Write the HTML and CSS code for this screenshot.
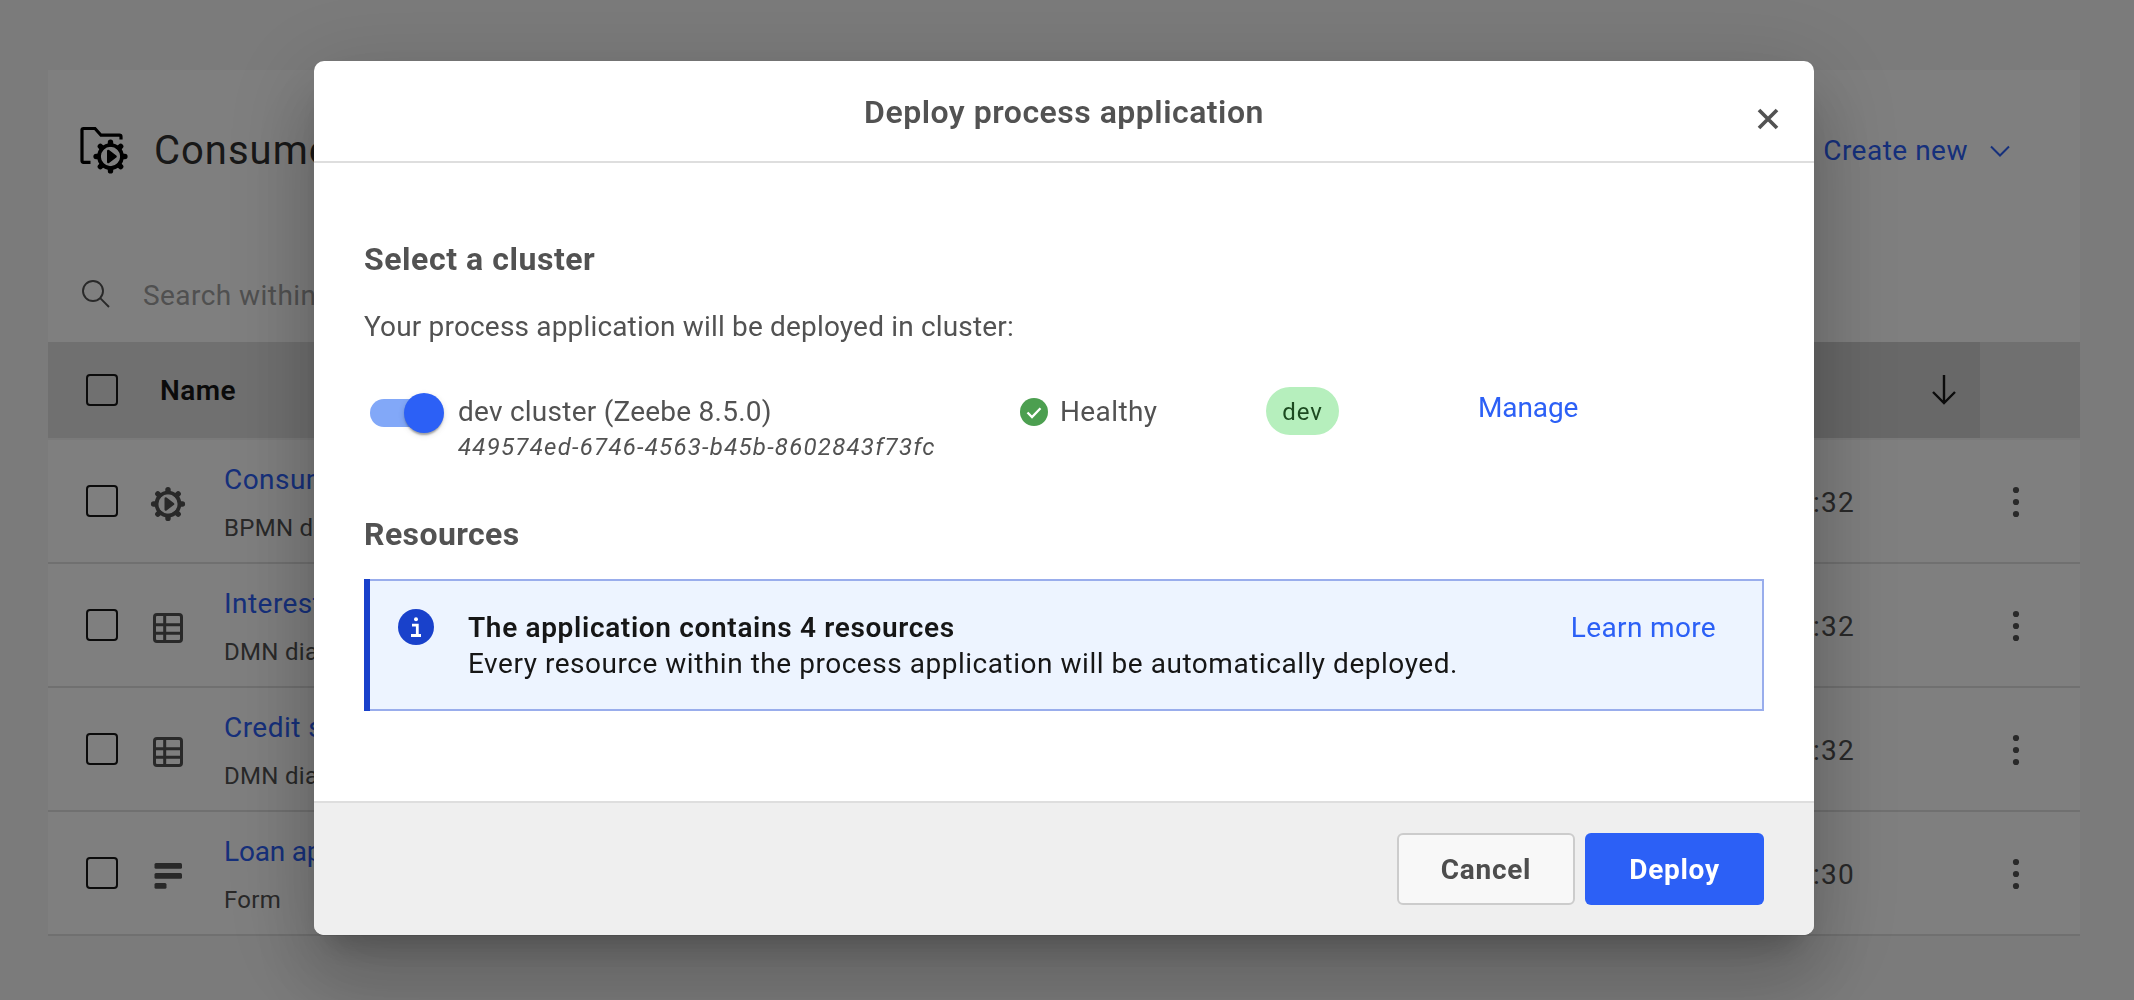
FILE: index.html
```
<!DOCTYPE html>
<html lang="en">
<head>
<meta charset="utf-8">
<title>Deploy process application</title>
<link rel="stylesheet" href="styles.css">
</head>
<body>
<svg class="sprite" aria-hidden="true">
  <defs>
    <g id="tooth"><path d="M0-12.500V-14.400" fill="none" stroke="currentColor" stroke-width="5.400" stroke-linecap="round"/></g>
    <symbol id="gear" viewBox="-18 -18 36 36">
      <circle r="11.500" fill="none" stroke="currentColor" stroke-width="3.700"/>
      <use href="#tooth"/><use href="#tooth" transform="rotate(45)"/><use href="#tooth" transform="rotate(90)"/><use href="#tooth" transform="rotate(135)"/>
      <use href="#tooth" transform="rotate(180)"/><use href="#tooth" transform="rotate(225)"/><use href="#tooth" transform="rotate(270)"/><use href="#tooth" transform="rotate(315)"/>
      <path d="M-2.200-5.400L5 0-2.200 5.400Z" fill="currentColor" stroke="currentColor" stroke-width="2.600" stroke-linejoin="round"/>
    </symbol>
    <symbol id="table" viewBox="0 0 30 30">
      <path d="M4 1.500H26Q28.500 1.500 28.500 4V26Q28.500 28.500 26 28.500H4Q1.500 28.500 1.500 26V4Q1.500 1.500 4 1.500ZM1.500 11.700H28.500M1.500 20.200H28.500M11.700 1.500V28.500" fill="none" stroke="currentColor" stroke-width="3"/>
    </symbol>
    <symbol id="form" viewBox="0 0 30 30">
      <rect x="1.500" y="2" width="27.500" height="5.800" rx="1.500" fill="currentColor"/>
      <rect x="1.500" y="12" width="27.500" height="5.800" rx="1.500" fill="currentColor"/>
      <rect x="1.500" y="22" width="12" height="5.800" rx="1.500" fill="currentColor"/>
    </symbol>
    <symbol id="kebab" viewBox="0 0 8 32">
      <circle cx="4" cy="4" r="3.100"/><circle cx="4" cy="16" r="3.100"/><circle cx="4" cy="28" r="3.100"/>
    </symbol>
  </defs>
</svg>

<main class="panel">
  <header class="panel-head">
    <svg class="folder" viewBox="0 0 50 50">
      <path d="M10.500 36.300H3.500Q2 36.300 2 34.800V4Q2 2.500 3.500 2.500H15L21 9.200H39.500Q41 9.200 41 10.700V13.500" fill="none" stroke="currentColor" stroke-width="3.200"/>
      <use href="#gear" x="12.500" y="12.500" width="36" height="36"/>
    </svg>
    <h1 class="panel-title">Consumer</h1>
    <button class="create">Create new
      <svg class="chevron" viewBox="0 0 20 12"><path d="M1 1.500L10 10.500L19 1.500" fill="none" stroke="currentColor" stroke-width="2"/></svg>
    </button>
  </header>
  <div class="search">
    <svg class="search-icon" viewBox="0 0 28 28"><circle cx="11" cy="11" r="10" fill="none" stroke="currentColor" stroke-width="1.900"/><path d="M18.200 18.200L27 27" stroke="currentColor" stroke-width="1.900"/></svg>
    <span>Search within</span>
  </div>
  <div class="thead">
    <span class="check"></span>
    <span class="th">Name</span>
    <span class="sorted"><svg class="arrow" viewBox="0 0 24 30"><path d="M12 0V28M1 17L12 28L23 17" fill="none" stroke="currentColor" stroke-width="2.400"/></svg></span>
    <span class="thead-end"></span>
  </div>
  <div class="row">
    <span class="check"></span><svg class="type gear"><use href="#gear"/></svg>
    <div class="name"><a>Consumer</a><small>BPMN diag</small></div>
    <time>:32</time><svg class="kebab"><use href="#kebab"/></svg>
  </div>
  <div class="row">
    <span class="check"></span><svg class="type"><use href="#table"/></svg>
    <div class="name"><a>Interest</a><small>DMN diagram</small></div>
    <time>:32</time><svg class="kebab"><use href="#kebab"/></svg>
  </div>
  <div class="row">
    <span class="check"></span><svg class="type"><use href="#table"/></svg>
    <div class="name"><a>Credit score</a><small>DMN diagram</small></div>
    <time>:32</time><svg class="kebab"><use href="#kebab"/></svg>
  </div>
  <div class="row">
    <span class="check"></span><svg class="type"><use href="#form"/></svg>
    <div class="name"><a class="tight">Loan app</a><small>Form</small></div>
    <time>:30</time><svg class="kebab"><use href="#kebab"/></svg>
  </div>
</main>

<div class="overlay">
  <section class="modal" role="dialog">
    <header class="modal-head">
      <h2 class="modal-title">Deploy process application</h2>
      <svg class="close" viewBox="0 0 22 22"><path d="M2 2L20 20M20 2L2 20" stroke="currentColor" stroke-width="3.700"/></svg>
    </header>
    <div class="modal-body">
      <h3>Select a cluster</h3>
      <p class="lead">Your process application will be deployed in cluster:</p>
      <div class="cluster">
        <span class="toggle"><span class="knob"></span></span>
        <div class="cluster-name"><span class="cluster-title">dev cluster (Zeebe 8.5.0)</span><i>449574ed-6746-4563-b45b-8602843f73fc</i></div>
        <div class="status">
          <svg class="ok" viewBox="0 0 28 28"><circle cx="14" cy="14" r="14" fill="#4c9f50"/><path d="M7.500 14.500L12 19L20.500 10.200" fill="none" stroke="#fff" stroke-width="2.300"/></svg>
          <span>Healthy</span>
        </div>
        <span class="tag">dev</span>
        <a class="manage">Manage</a>
      </div>
      <h3 class="resources">Resources</h3>
      <div class="notice">
        <svg class="info" viewBox="0 0 36 36"><circle cx="18" cy="18" r="18" fill="#1941cb"/><circle cx="18" cy="10.300" r="2" fill="#fff"/><path d="M14 16.200H19.300V26.500M13 26.500H23" fill="none" stroke="#fff" stroke-width="2.800"/></svg>
        <div class="notice-text"><strong>The application contains 4 resources</strong><span>Every resource within the process application will be automatically deployed.</span></div>
        <a class="learn">Learn more</a>
      </div>
    </div>
    <footer class="modal-foot">
      <button class="btn cancel">Cancel</button>
      <button class="btn deploy">Deploy</button>
    </footer>
  </section>
</div>
</body>
</html>
```
FILE: styles.css
```
* { box-sizing: border-box; }
body {
  margin: 0;
  height: 1000px;
  padding: 70px 54px 0 48px;
  overflow: hidden;
  background: #f7f7f7;
  color: #525252;
  font: 28px/36px Roboto, "Noto Sans", sans-serif;
  letter-spacing: .45px;
}
h1, h2, h3, p { margin: 0; }
a { color: #2c60f6; }
button { font: inherit; letter-spacing: inherit; border: 0; background: none; padding: 0; }
svg { display: block; flex: none; }
.sprite { position: absolute; width: 0; height: 0; }

.panel { width: 2032px; background: #fff; }
.panel-head { display: flex; align-items: center; height: 161px; padding: 0 69px 0 32px; }
.folder { width: 50px; height: 50px; color: #000; }
.panel-title { flex: 1; margin: 1px 0 0 24px; color: #303030; font-size: 40px; font-weight: 400; letter-spacing: 1px; line-height: 50px; }
.create { display: flex; align-items: center; gap: 22px; color: #2c60f6; letter-spacing: .5px; }
.chevron { width: 20px; height: 12px; margin-right: 1px; }
.search { display: flex; align-items: center; gap: 33px; height: 111px; padding: 19px 0 0 34px; color: #a0a0a0; }
.search-icon { width: 28px; height: 28px; color: #525252; margin-bottom: 5px; }

.check { flex: none; width: 32px; height: 32px; border: 2px solid #161616; border-radius: 4px; }
.thead { display: flex; align-items: center; height: 98px; padding-left: 38px; background: #e0e0e0; border-bottom: 2px solid #f4f4f4; color: #161616; }
.th { flex: 1; margin: 2px 0 0 42px; font-weight: 600; }
.sorted { display: flex; align-items: center; justify-content: flex-end; width: 300px; height: 96px; padding-right: 24px; background: #d1d1d1; }
.arrow { width: 24px; height: 30px; }
.thead-end { width: 100px; }

.row { display: flex; align-items: center; height: 124px; padding: 0 60px 0 38px; border-bottom: 2px solid #e0e0e0; }
.type { width: 30px; height: 30px; margin: 5px 0 0 35px; }
.type.gear { width: 36px; height: 36px; margin: 6px -3px 0 32px; }
.name { flex: 1; display: flex; flex-direction: column; gap: 8px; margin: 5px 0 0 41px; line-height: 40px; }
.name small { font-size: 24px; letter-spacing: .3px; }
.name .tight { letter-spacing: -.2px; }
.row time { width: 41px; margin: 4px 158px 0 0; letter-spacing: 1.3px; }
.kebab { width: 8px; height: 32px; margin-top: 2px; fill: #525252; }

.overlay { position: fixed; inset: 0; display: flex; justify-content: center; align-items: flex-start; padding: 61px 6px 0 0; background: rgba(0, 0, 0, .5); }
.modal {
  width: 1500px;
  height: 874px;
  display: flex;
  flex-direction: column;
  overflow: hidden;
  border-radius: 10px;
  background: #fff;
  box-shadow: 0 22px 30px -14px rgba(0, 0, 0, .2), 0 48px 76px 6px rgba(0, 0, 0, .14), 0 18px 92px 16px rgba(0, 0, 0, .12);
}
.modal-head { display: grid; grid-template-columns: 1fr auto 1fr; align-items: center; height: 102px; padding: 2px 35px 0; border-bottom: 2px solid #dedede; }
.modal-title { grid-column: 2; font-size: 32px; font-weight: 600; letter-spacing: .5px; }
.close { justify-self: end; width: 22px; height: 22px; margin-top: 14px; }
.modal-body { flex: 1; padding: 76px 50px 0; }
h3 { font-size: 32px; font-weight: 700; line-height: 40px; letter-spacing: .55px; }
.lead { margin-top: 28px; line-height: 40px; letter-spacing: .17px; }
.cluster { display: grid; grid-template-columns: 94px 562px 246px 212px auto; align-items: start; height: 78px; margin-top: 40px; }
.toggle { display: flex; justify-content: flex-end; align-items: center; width: 68px; height: 28px; margin: 12px 0 0 6px; border-radius: 14px; background: #82a8f8; }
.knob { flex: none; width: 40px; height: 40px; margin-right: -6px; border-radius: 50%; background: #2c60f6; box-shadow: 0 4px 2px -2px rgba(0, 0, 0, .2), 0 2px 2px rgba(0, 0, 0, .14), 0 2px 6px rgba(0, 0, 0, .12); }
.cluster-name { display: flex; flex-direction: column; padding-top: 7px; line-height: 35px; letter-spacing: .24px; }
.cluster-name i { margin-top: 1px; font-size: 24px; letter-spacing: 1.26px; }
.status { display: flex; align-items: center; gap: 12px; padding-top: 7px; line-height: 35px; letter-spacing: .4px; }
.ok { width: 28px; height: 28px; }
.tag { display: flex; justify-content: center; align-items: center; width: 73px; height: 48px; padding-top: 1px; border-radius: 24px; background: #b6efbd; color: #1c4a20; font-size: 24px; letter-spacing: 1px; }
.manage { padding-top: 3px; line-height: 35px; letter-spacing: -.1px; }
.resources { margin-top: 49px; letter-spacing: .4px; }
.notice { position: relative; display: flex; align-items: flex-start; height: 132px; margin-top: 25px; padding: 28px 46px 0 34px; border: 2px solid #99adec; border-left: 0; background: #edf4ff; color: #161616; }
.notice::before { content: ""; position: absolute; left: 0; top: -2px; bottom: -2px; width: 6px; background: #1941cb; }
.info { width: 36px; height: 36px; }
.notice-text { flex: 1; display: flex; flex-direction: column; margin: 1px 0 0 34px; letter-spacing: .53px; white-space: nowrap; }
.notice-text strong { font-weight: 600; letter-spacing: .66px; }
.learn { margin-top: 1px; letter-spacing: .35px; }
.modal-foot { display: flex; justify-content: flex-end; gap: 10px; height: 134px; padding: 30px 50px 0 0; border-top: 2px solid #dedede; background: #efefef; }
.btn { height: 72px; padding-top: 1px; border-radius: 6px; font-weight: 700; letter-spacing: .7px; }
.cancel { width: 178px; border: 2px solid #ccc; background: #f8f8f8; color: #4d4d4d; }
.deploy { width: 179px; background: #2c60f6; color: #fff; }
```
